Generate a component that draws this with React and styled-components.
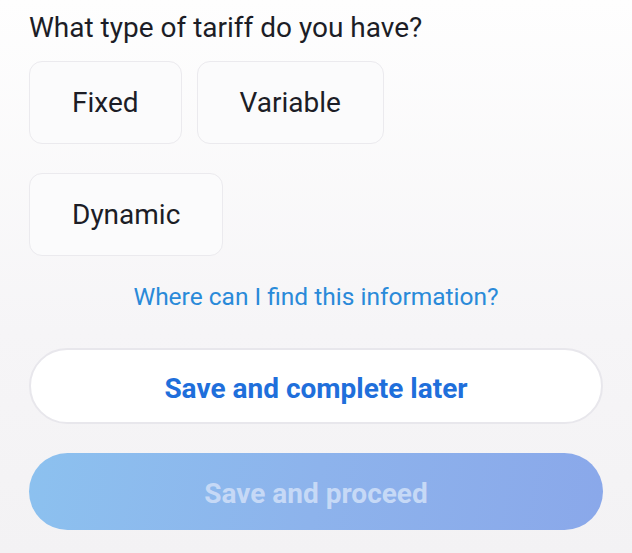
import React from 'react';
import styled, { createGlobalStyle } from 'styled-components';

const GlobalStyle = createGlobalStyle`
  html, body {
    margin: 0;
    padding: 0;
  }
  body {
    font-family: Roboto, "Noto Sans", sans-serif;
    background: linear-gradient(180deg, #fefefe 0%, #f6f5f7 60%, #f3f2f4 100%);
    min-height: 553px;
  }
`;

const Page = styled.div`
  box-sizing: border-box;
  width: 632px;
  height: 553px;
  padding: 11px 29px 0 29px;
  display: flex;
  flex-direction: column;
`;

const Question = styled.h2`
  margin: 0;
  font-size: 28px;
  line-height: 34px;
  font-weight: 400;
  color: #1c1d26;
`;

const OptionGrid = styled.div`
  display: flex;
  flex-direction: column;
  gap: 29px;
  margin-top: 16px;
`;

const OptionRow = styled.div`
  display: flex;
  gap: 15px;
`;

const Option = styled.button`
  box-sizing: border-box;
  height: 83px;
  padding: 0 42px;
  border: 1.5px solid #ebeaee;
  border-radius: 13px;
  background: #fbfbfc;
  font-family: inherit;
  font-size: 28px;
  color: #1c1d26;
  cursor: pointer;
`;

const HelpLink = styled.a`
  align-self: center;
  margin-top: 26px;
  font-size: 24.5px;
  line-height: 30px;
  color: #2a8ad9;
  text-decoration: none;
  cursor: pointer;
`;

const Pill = styled.button`
  box-sizing: border-box;
  width: 100%;
  padding: 4px 0 0;
  border-radius: 40px;
  font-family: inherit;
  font-size: 28px;
  font-weight: 700;
  cursor: pointer;
`;

const SecondaryPill = styled(Pill)`
  height: 76px;
  margin-top: 36px;
  border: 2.5px solid #e8e7ec;
  background: #ffffff;
  color: #1f6fdb;
`;

const PrimaryPill = styled(Pill)`
  height: 77px;
  margin-top: 29px;
  border: none;
  background: linear-gradient(100deg, #8cc1ef 0%, #8db3ec 50%, #8aa8ea 100%);
  color: #c6d9f6;
`;

export default function App() {
  return (
    <>
      <GlobalStyle />
      <Page>
        <Question>What type of tariff do you have?</Question>
        <OptionGrid>
          <OptionRow>
            <Option>Fixed</Option>
            <Option>Variable</Option>
          </OptionRow>
          <OptionRow>
            <Option>Dynamic</Option>
          </OptionRow>
        </OptionGrid>
        <HelpLink>Where can I find this information?</HelpLink>
        <SecondaryPill>Save and complete later</SecondaryPill>
        <PrimaryPill disabled>Save and proceed</PrimaryPill>
      </Page>
    </>
  );
}
